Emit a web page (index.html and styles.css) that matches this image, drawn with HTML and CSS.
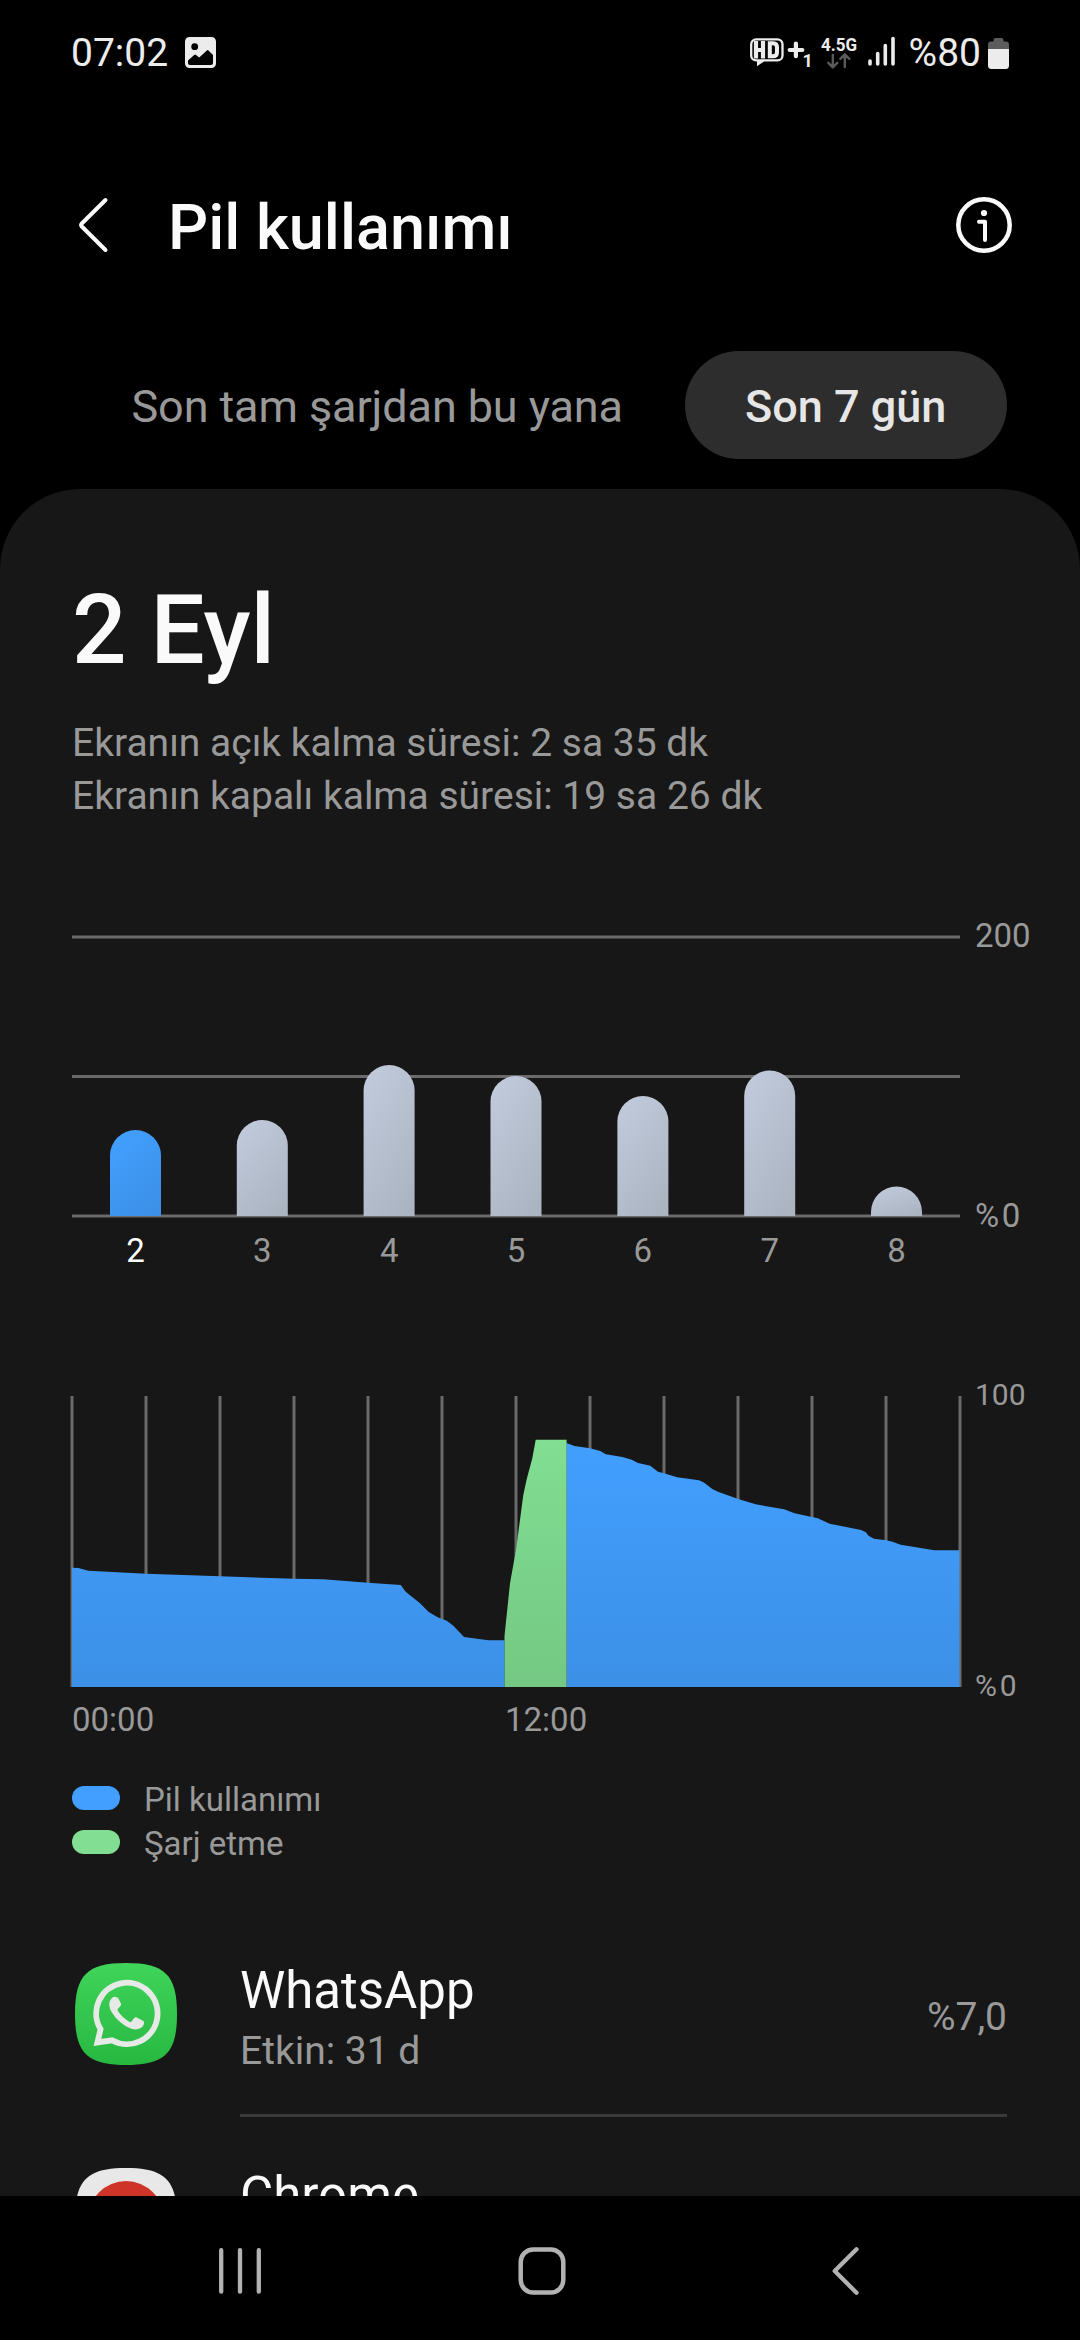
FILE: index.html
```html
<!DOCTYPE html>
<html lang="tr">
<head>
<meta charset="utf-8">
<title>Pil kullanımı</title>
<link rel="stylesheet" href="styles.css">
</head>
<body>
<div class="screen">
  <div class="status">
    <div class="status-left">
      <span class="clock">07:02</span>
      <svg class="picture-icon" width="31" height="31" viewBox="0 0 31 31">
        <path fill="#ececec" fill-rule="evenodd" d="M4.5 0h22A4.500 4.500 0 0 1 31 4.500v22a4.500 4.500 0 0 1-4.500 4.500h-22A4.500 4.500 0 0 1 0 26.500v-22A4.500 4.500 0 0 1 4.500 0ZM9.700 6.300a3.400 3.400 0 1 0 0 6.800a3.400 3.400 0 0 0 0-6.800ZM3 23.500v2.500q0 2 2 2h21q2 0 2-2v-8l-4.500-4.600q-.8-.7-1.600 0L14.200 20.500l-3.200-2.600q-.9-.7-1.800 0Z"/>
      </svg>
    </div>
    <div class="status-right">
      <svg class="signal" width="146" height="34" viewBox="749 36 146 34">
        <rect x="751.2" y="39.400" width="31.300" height="21" rx="5" fill="none" stroke="#ececec" stroke-width="2.300"/>
        <path fill="#ececec" d="M757 60h9l-9 6.300Z"/>
        <path fill="none" stroke="#ececec" stroke-width="4.200" d="M756 41v17.500M763 41v17.500M756 50h7"/>
        <path fill="none" stroke="#ececec" stroke-width="4" d="M769.800 43.200h3.200q4 0 4 4v5q0 4-4 4h-3.200Z"/>
        <path fill="none" stroke="#ececec" stroke-width="4.200" stroke-linecap="round" d="M789.700 50h12.600M795.900 43.500v12.700"/>
        <text class="sim-number" x="802.500" y="66.500">1</text>
        <text class="network" x="821" y="51" textLength="36" lengthAdjust="spacingAndGlyphs">4.5G</text>
        <path fill="none" stroke="#5a5a5a" stroke-width="2.400" stroke-linecap="round" stroke-linejoin="round" d="M832.800 55v12M828.300 62.800l4.500 4.500l4.500-4.500M844.800 67v-12M840.300 58.800l4.500-4.500l4.500 4.500"/>
        <path fill="none" stroke="#ececec" stroke-width="3.600" stroke-linecap="round" d="M870 61v3M877.700 53.500v10.500M885.300 45.500v18.500M893 38.500v25.500"/>
      </svg>
      <span class="charge">%80</span>
      <svg class="battery" width="21" height="32" viewBox="0 0 21 32">
        <path fill="#5c5c5c" d="M0 12V7.500q0-3 3-3h2.500V3q0-2 2-2h6q2 0 2 2v1.500H18q3 0 3 3V12Z"/>
        <path fill="#ececec" d="M0 12h21v16.500q0 3.500-3.500 3.500h-14Q0 32 0 28.500Z"/>
      </svg>
    </div>
  </div>

  <header class="header">
    <svg class="back" width="34" height="60" viewBox="0 0 34 60">
      <path fill="none" stroke="#fafafa" stroke-width="4" stroke-linecap="round" stroke-linejoin="round" d="M30.500 5L6.800 28.500q-1.500 1.500 0 3L30.500 55"/>
    </svg>
    <h1 class="title">Pil kullanımı</h1>
    <svg class="info" width="56" height="56" viewBox="0 0 56 56">
      <circle cx="28" cy="28" r="25.700" fill="none" stroke="#fafafa" stroke-width="4.500"/>
      <circle cx="28" cy="16" r="3.100" fill="#fafafa"/>
      <path fill="none" stroke="#fafafa" stroke-width="4" stroke-linecap="round" stroke-linejoin="round" d="M23 24.700h6v18.300"/>
    </svg>
  </header>

  <nav class="tabs">
    <span class="tab tab-wide">Son tam şarjdan bu yana</span>
    <span class="tab tab-active">Son 7 gün</span>
  </nav>

  <main class="panel">
    <h2 class="date">2 Eyl</h2>
    <p class="summary">Ekranın açık kalma süresi: 2 sa 35 dk</p>
    <p class="summary">Ekranın kapalı kalma süresi: 19 sa 26 dk</p>

    <section class="chart chart-week">
      <div class="plot">
        <svg class="plot-area" width="888" height="283" viewBox="72 935 888 283">
          <defs>
            <linearGradient id="gray" x1="0.2" y1="0" x2="0.8" y2="1">
              <stop offset="0" stop-color="#c1cadb"/><stop offset="1" stop-color="#abb4c1"/>
            </linearGradient>
            <linearGradient id="blue" x1="0.2" y1="0" x2="0.8" y2="1">
              <stop offset="0" stop-color="#429fff"/><stop offset="1" stop-color="#3c90e6"/>
            </linearGradient>
          </defs>
          <path stroke="#6a6a6a" stroke-width="3" d="M72 937h888M72 1076.500h888M72 1216h888"/>
          <path fill="url(#blue)" d="M110 1216v-60.500a25.500 25.500 0 0 1 51 0v60.500Z"/>
          <path fill="url(#gray)" d="M236.800 1216v-70.500a25.500 25.500 0 0 1 51 0v70.500Z"/>
          <path fill="url(#gray)" d="M363.600 1216v-125.500a25.500 25.500 0 0 1 51 0v125.500Z"/>
          <path fill="url(#gray)" d="M490.500 1216v-114.500a25.500 25.500 0 0 1 51 0v114.500Z"/>
          <path fill="url(#gray)" d="M617.400 1216v-94.500a25.500 25.500 0 0 1 51 0v94.500Z"/>
          <path fill="url(#gray)" d="M744.200 1216v-120a25.500 25.500 0 0 1 51 0v120Z"/>
          <path fill="url(#gray)" d="M871 1216v-4a25.500 25.500 0 0 1 51 0v4Z"/>
        </svg>
        <div class="days">
          <span class="day day-active">2</span><span class="day">3</span><span class="day">4</span><span class="day">5</span><span class="day">6</span><span class="day">7</span><span class="day">8</span>
        </div>
      </div>
      <div class="axis axis-week"><span>200</span><span class="axis-zero">%0</span></div>
    </section>

    <section class="chart chart-day">
      <div class="plot">
        <svg class="plot-area" width="888" height="291" viewBox="72 1396 888 291">
          <defs>
            <linearGradient id="use" gradientUnits="userSpaceOnUse" x1="0" y1="1440" x2="0" y2="1687">
              <stop offset="0" stop-color="#429fff"/><stop offset="1" stop-color="#3c90e6"/>
            </linearGradient>
            <linearGradient id="charging" gradientUnits="userSpaceOnUse" x1="0" y1="1440" x2="0" y2="1687">
              <stop offset="0" stop-color="#81de92"/><stop offset="1" stop-color="#74c883"/>
            </linearGradient>
          </defs>
          <path stroke="#6a6a6a" stroke-width="3" d="M72 1396v291M146 1396v290M220 1396v290M294 1396v290M368 1396v290M442 1396v290M516 1396v290M590 1396v290M664 1396v290M738 1396v290M812 1396v290M886 1396v290M960 1396v291"/>
          <path fill="url(#use)" d="M72 1687V1567.700L78.300 1568L88.300 1570.700L146 1573.700L220 1576.300L294 1578.700L323.300 1579.300L368 1582.700L400.700 1585L405.700 1591.700L420 1603.300L428.700 1612L437.700 1617.300L446.700 1620.700L453.300 1625.700L464 1637L488.300 1640.300H504.500V1687Z"/>
          <path fill="url(#use)" d="M566.500 1687V1443L574.300 1446L590 1448.300L600.200 1451L605.800 1454.300L622.400 1457L631.700 1459.700L638 1463L650.200 1465.700L658 1471.700L663.900 1473.300L677.200 1477.300L699 1480.300L704.200 1482.700L712.300 1489L718.600 1492L738.200 1499L755.600 1504.300L784.100 1509.300L794.500 1513.300L811.900 1517L817.800 1518.300L829.600 1523.700L861.100 1530L865.900 1532.300L868.500 1535.700L874 1538.700L886.200 1540.300L892.500 1541.700L900.600 1544.700L934.300 1550.300H959.500V1687Z"/>
          <path fill="url(#charging)" d="M504.500 1687V1636L510 1583.300L516 1550L523.300 1495L526.700 1479.300L532.300 1458.300L535.700 1439.700H566.600V1687Z"/>
        </svg>
        <div class="hours"><span class="hour">00:00</span><span class="hour">12:00</span></div>
      </div>
      <div class="axis axis-day"><span>100</span><span class="axis-zero">%0</span></div>
    </section>

    <ul class="legend">
      <li class="legend-item"><span class="swatch swatch-use"></span><span class="legend-text">Pil kullanımı</span></li>
      <li class="legend-item"><span class="swatch swatch-charge"></span><span class="legend-text">Şarj etme</span></li>
    </ul>

    <div class="apps">
      <div class="app">
        <svg class="app-icon" width="102" height="102" viewBox="0 0 102 102">
          <defs>
            <linearGradient id="wa" x1="0" y1="0" x2="0" y2="1">
              <stop offset="0" stop-color="#40d45b"/><stop offset="1" stop-color="#27b840"/>
            </linearGradient>
          </defs>
          <path fill="url(#wa)" d="M51 0C90 0 102 12 102 51S90 102 51 102S0 90 0 51S12 0 51 0Z"/>
          <path fill="none" stroke="#e6e9e6" stroke-width="5.800" d="M22.400 79.400L25.600 66.300A30.700 30.700 0 1 1 37 77.300Z"/>
          <path fill="#e6e9e6" d="M40.500 34q-1.800-.8-3.800 1.200c-3 3-3 8-.8 12.500C40.500 56 48.500 63 56.500 65.800c5 1.600 10 .3 12-3.700q1.300-3.500-.5-4.300l-6.800-3.500q-1-.5-1.800.5l-3.200 3.900q-.6.600-1.500.2C49.500 56.400 45.200 52 42.600 47.600q-.4-.8.200-1.500l3-3.600q.6-.8.200-1.800L43.500 35.500q-.6-1.500-3-1.500Z"/>
        </svg>
        <div class="app-body">
          <div class="app-text">
            <span class="app-name">WhatsApp</span>
            <span class="app-active">Etkin: 31 d</span>
          </div>
          <span class="app-share">%7,0</span>
        </div>
      </div>
      <div class="app">
        <svg class="app-icon" width="102" height="102" viewBox="0 0 102 102">
          <path fill="#e8e8e8" d="M51 0C90 0 102 12 102 51S90 102 51 102S0 90 0 51S12 0 51 0Z"/>
          <circle cx="51" cy="51" r="38" fill="#cf3429"/>
        </svg>
        <div class="app-body">
          <div class="app-text"><span class="app-name">Chrome</span></div>
        </div>
      </div>
    </div>
  </main>

  <footer class="navbar">
    <svg class="nav-icon" width="46" height="50" viewBox="0 0 46 50">
      <path fill="none" stroke="#b2b2b2" stroke-width="4.300" stroke-linecap="round" d="M4.200 4.200v41.500M23 4.200v41.500M41.800 4.200v41.500"/>
    </svg>
    <svg class="nav-icon" width="48" height="50" viewBox="0 0 48 50">
      <rect x="2.700" y="3.500" width="42.600" height="43" rx="12.500" fill="none" stroke="#b2b2b2" stroke-width="4.500"/>
    </svg>
    <svg class="nav-icon" width="30" height="50" viewBox="0 0 30 50">
      <path fill="none" stroke="#b2b2b2" stroke-width="4.300" stroke-linecap="round" stroke-linejoin="round" d="M26.500 3.300L4.700 25L26.500 46.700"/>
    </svg>
  </footer>
</div>
</body>
</html>
```

FILE: styles.css
```css
* { box-sizing: border-box; margin: 0; padding: 0; }

body {
  background: #000;
  font-family: Roboto, "Noto Sans", sans-serif;
  color: #fafafa;
}

svg { display: block; flex: none; }

.screen {
  display: flex;
  flex-direction: column;
  width: 1080px;
  height: 2340px;
  overflow: hidden;
  background: #000;
}

.status {
  display: flex;
  justify-content: space-between;
  align-items: center;
  height: 105px;
  padding: 0 71px 0 71px;
  color: #ececec;
  font-size: 39px;
}

.status-left, .status-right { display: flex; align-items: center; }
.picture-icon { margin-left: 17px; }
.signal { overflow: visible; }
.charge { margin-left: 14px; }
.battery { margin-left: 7px; }
.sim-number { font-size: 18px; font-weight: 700; fill: #ececec; }
.network { font-size: 19px; font-weight: 700; fill: #ececec; }

.header {
  display: flex;
  align-items: center;
  height: 240px;
  padding: 0 68px 0 75px;
}

.title {
  flex: 1;
  margin-left: 59px;
  padding-top: 5px;
  font-size: 63px;
  font-weight: 500;
  line-height: 74px;
}

.tabs {
  display: flex;
  justify-content: flex-end;
  height: 108px;
  margin-top: 6px;
  padding-right: 73px;
}

.tab {
  padding: 2px 60px 0;
  border-radius: 54px;
  color: #999;
  font-size: 45px;
  line-height: 108px;
  white-space: nowrap;
}

.tab-wide { padding-right: 62px; letter-spacing: -0.1px; }
.tab-active { width: 322px; background: #2d2d2d; color: #e6e6e6; font-weight: 500; }

.panel {
  height: 1707px;
  margin-top: 30px;
  padding: 85px 72px 0;
  overflow: hidden;
  border-radius: 80px 80px 0 0;
  background: #171717;
}

.date { font-size: 96px; font-weight: 500; line-height: 112px; margin-bottom: 31px; }
.summary { color: #999; font-size: 39px; line-height: 53px; }

.chart { display: flex; width: 1000px; color: #999; }
.plot { width: 888px; flex: none; }
.plot-area { overflow: visible; }
.chart-week { margin-top: 93px; }
.chart-week .plot { padding-top: 19px; }
.chart-day { margin-top: 105.600px; }
.chart-day .plot { padding-top: 20px; }

.days { display: flex; margin-top: 14.400px; font-size: 33px; line-height: 38px; }
.day { flex: 1; text-align: center; }
.day-active { color: #fff; }

.hours { display: flex; margin-top: 14.400px; font-size: 33px; line-height: 38px; }
.hour { width: 433px; }

.axis {
  display: flex;
  flex-direction: column;
  justify-content: space-between;
  margin: 1px 0 0 15px;
}
.axis-week { height: 318px; font-size: 33px; line-height: 38px; }
.axis-day { height: 327px; font-size: 30px; line-height: 36px; }
.axis-zero { letter-spacing: 2.700px; }

.legend { margin-top: 36.600px; list-style: none; }
.legend-item { display: flex; align-items: center; height: 44px; }
.swatch { width: 48px; height: 24px; border-radius: 12px; }
.swatch-use { background: #429fff; }
.swatch-charge { background: #81de92; }
.legend-text { margin-left: 24px; padding-top: 5px; color: #999; font-size: 33px; line-height: 38px; }

.apps { margin-top: 48px; }
.app { display: flex; height: 205px; }
.app-icon { margin: 51px 0 0 3px; }
.app-body {
  display: flex;
  justify-content: space-between;
  width: 767px;
  margin-left: 63px;
  border-bottom: 3px solid #3a3a3a;
}
.app-text { display: flex; flex-direction: column; padding-top: 49px; }
.app-name { font-size: 51px; line-height: 60px; }
.app-active { margin-top: 4px; color: #999; font-size: 39px; line-height: 52px; }
.app-share { padding-top: 79px; color: #999; font-size: 39px; line-height: 52px; }

.navbar {
  display: flex;
  align-items: center;
  height: 144px;
  padding: 6px 0 0 217px;
}
.nav-icon + .nav-icon { margin-left: 255px; }
.nav-icon:last-child { margin-left: 264px; }
```
